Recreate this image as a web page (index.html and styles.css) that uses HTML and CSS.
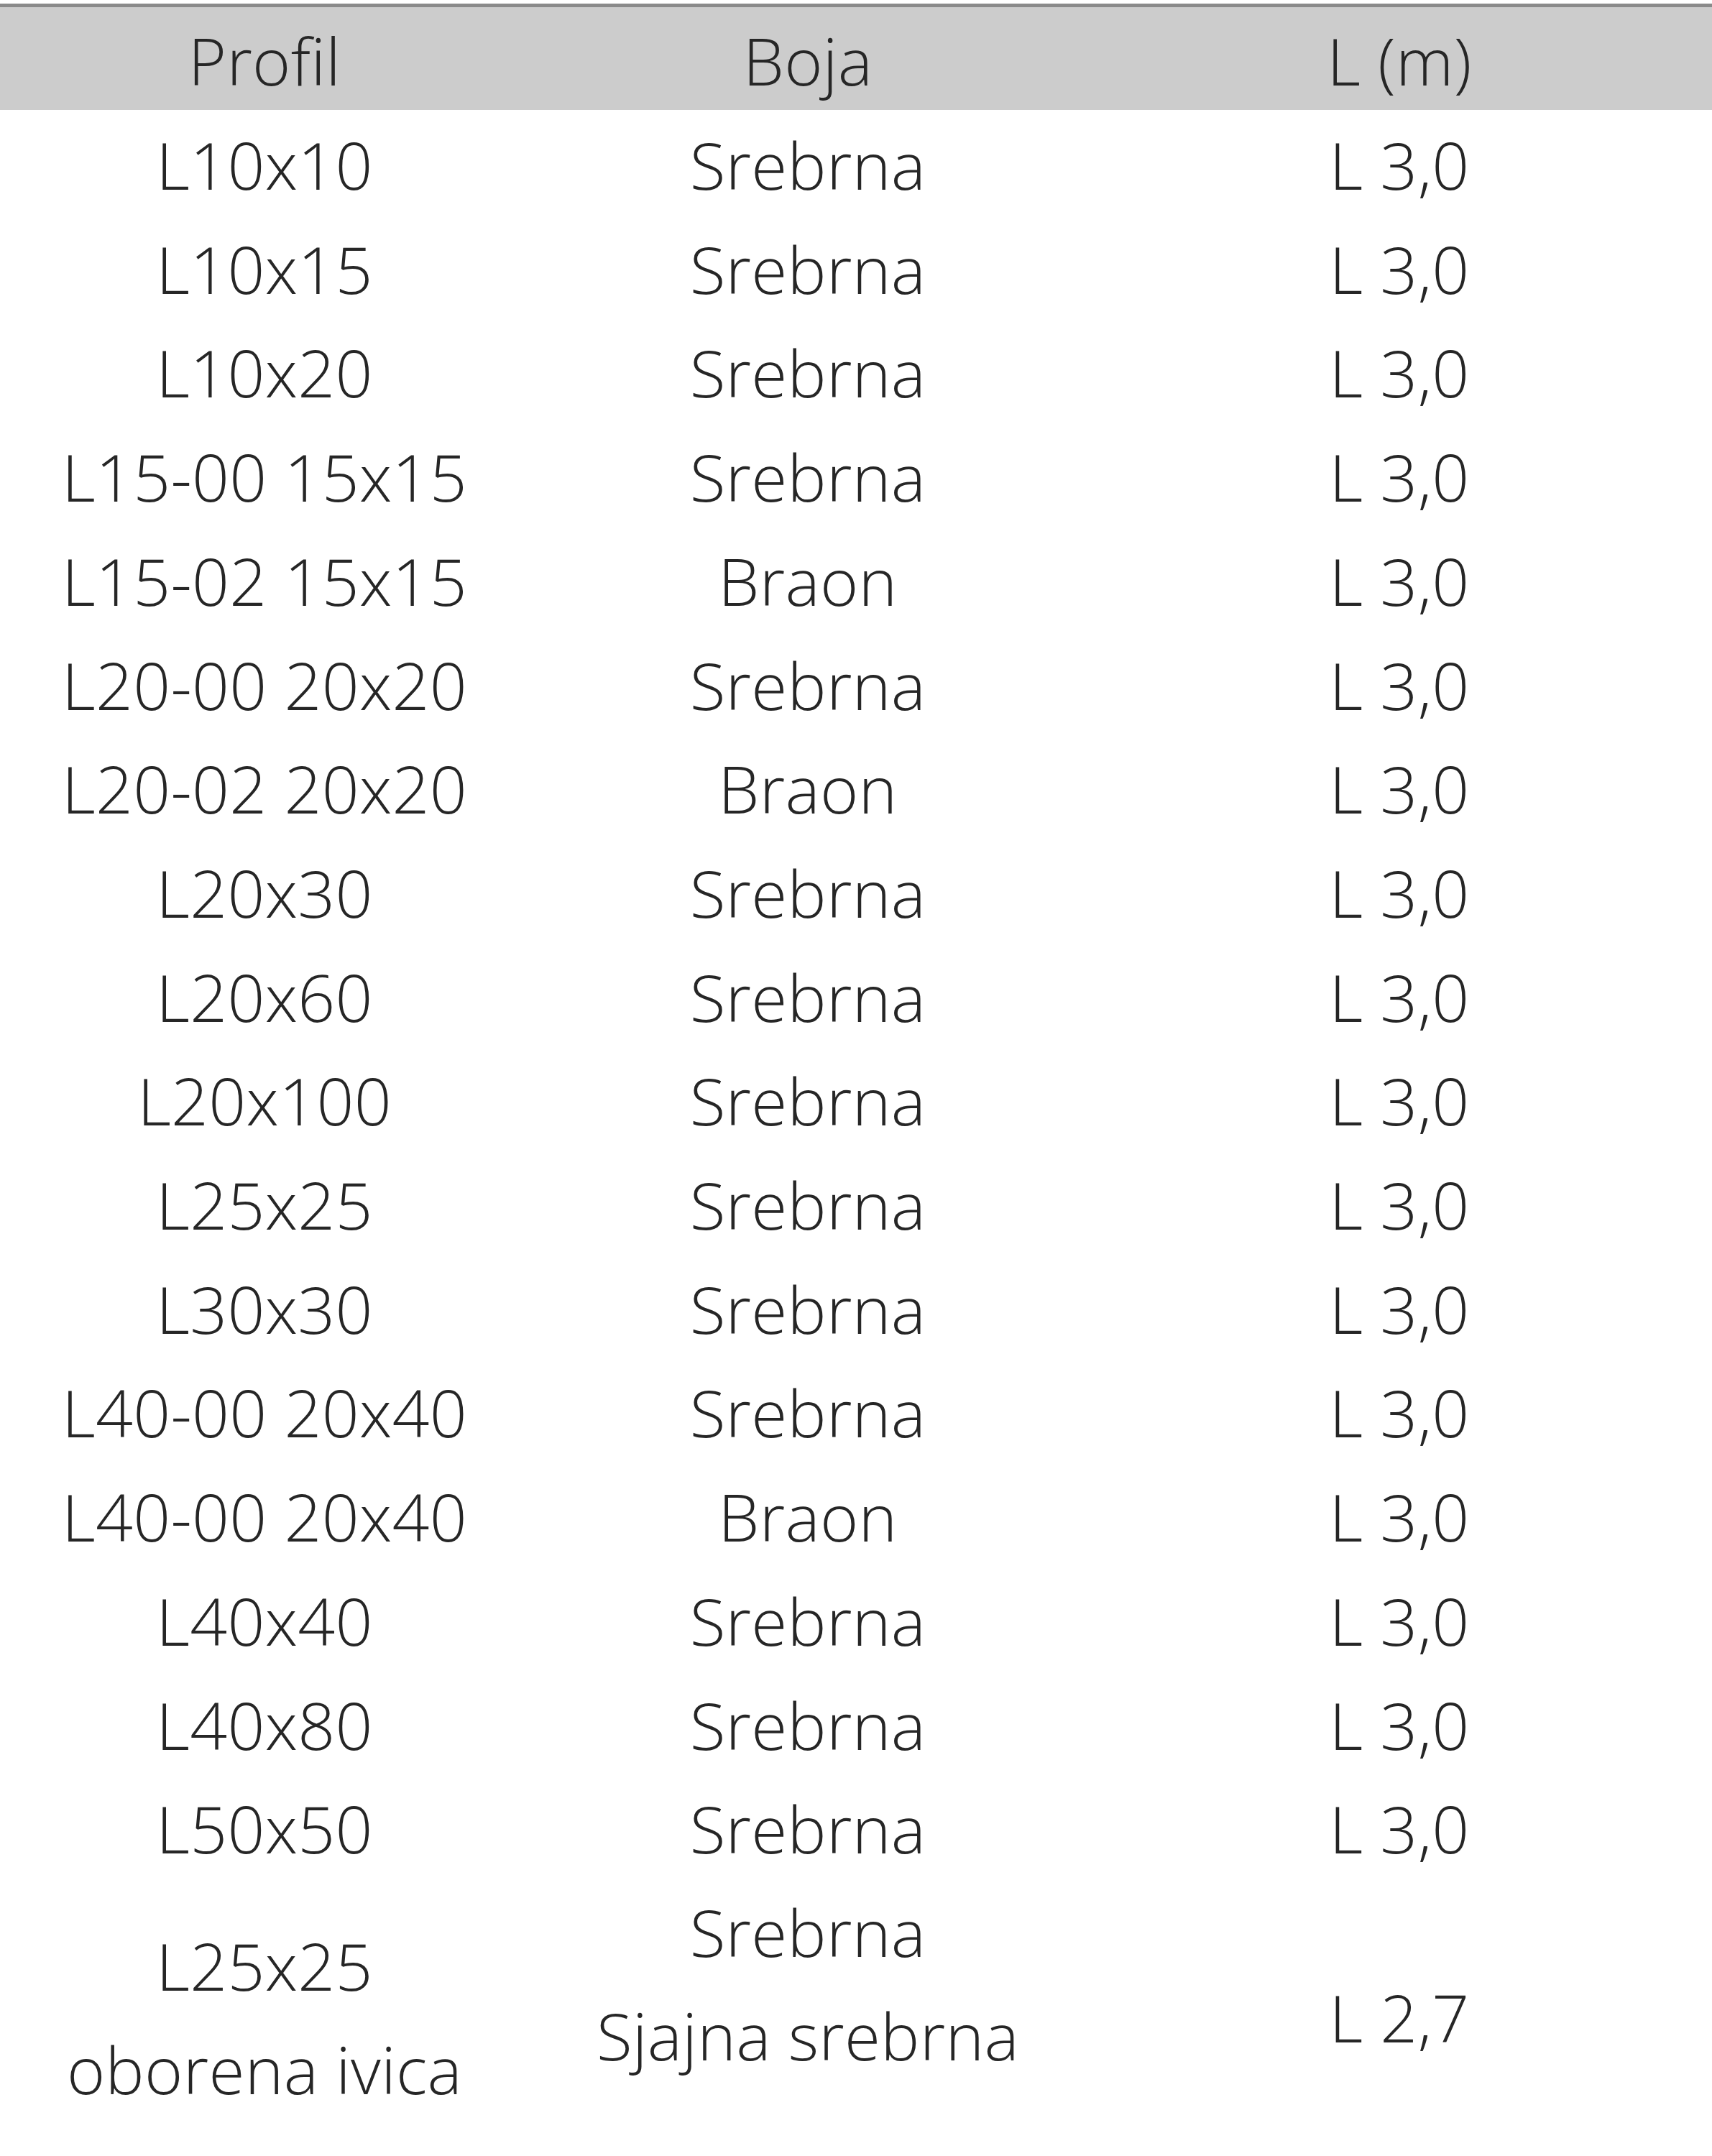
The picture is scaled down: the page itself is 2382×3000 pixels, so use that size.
FILE: index.html
```html
<!DOCTYPE html>
<html lang="sr">
<head>
<meta charset="utf-8">
<title>Profili</title>
<link rel="stylesheet" href="styles.css">
</head>
<body>
<table class="profiles">
  <colgroup>
    <col class="col-profil">
    <col class="col-boja">
    <col class="col-len">
  </colgroup>
  <thead>
    <tr class="head-row"><th>Profil</th><th>Boja</th><th>L (m)</th></tr>
  </thead>
  <tbody>
    <tr class="row"><td>L10x10</td><td>Srebrna</td><td>L 3,0</td></tr>
    <tr class="row"><td>L10x15</td><td>Srebrna</td><td>L 3,0</td></tr>
    <tr class="row"><td>L10x20</td><td>Srebrna</td><td>L 3,0</td></tr>
    <tr class="row"><td>L15-00 15x15</td><td>Srebrna</td><td>L 3,0</td></tr>
    <tr class="row"><td>L15-02 15x15</td><td>Braon</td><td>L 3,0</td></tr>
    <tr class="row"><td>L20-00 20x20</td><td>Srebrna</td><td>L 3,0</td></tr>
    <tr class="row"><td>L20-02 20x20</td><td>Braon</td><td>L 3,0</td></tr>
    <tr class="row"><td>L20x30</td><td>Srebrna</td><td>L 3,0</td></tr>
    <tr class="row"><td>L20x60</td><td>Srebrna</td><td>L 3,0</td></tr>
    <tr class="row"><td>L20x100</td><td>Srebrna</td><td>L 3,0</td></tr>
    <tr class="row"><td>L25x25</td><td>Srebrna</td><td>L 3,0</td></tr>
    <tr class="row"><td>L30x30</td><td>Srebrna</td><td>L 3,0</td></tr>
    <tr class="row"><td>L40-00 20x40</td><td>Srebrna</td><td>L 3,0</td></tr>
    <tr class="row"><td>L40-00 20x40</td><td>Braon</td><td>L 3,0</td></tr>
    <tr class="row"><td>L40x40</td><td>Srebrna</td><td>L 3,0</td></tr>
    <tr class="row"><td>L40x80</td><td>Srebrna</td><td>L 3,0</td></tr>
    <tr class="row"><td>L50x50</td><td>Srebrna</td><td>L 3,0</td></tr>
    <tr class="row-last"><td>L25x25<br>oborena ivica</td><td class="cell-top">Srebrna<br>Sjajna srebrna</td><td>L 2,7</td></tr>
  </tbody>
</table>
</body>
</html>
```
FILE: styles.css
```css
html, body {
  margin: 0;
  padding: 0;
  background: #ffffff;
}

.profiles {
  width: 2382px;
  table-layout: fixed;
  border-collapse: separate;
  border-spacing: 0;
  margin-top: 5px;
  border-top: 5px solid #8a8a8a;
  font-family: "Open Sans", "Noto Sans", sans-serif;
  font-size: 91px;
  font-weight: 300;
  letter-spacing: 0.3px;
  color: #262626;
}

.col-profil { width: 736px; }
.col-boja { width: 776px; }
.col-len { width: 870px; }

.profiles th,
.profiles td {
  text-align: center;
  vertical-align: middle;
  white-space: nowrap;
}

.profiles th {
  font-weight: 300;
  background: #cccccc;
  padding: 6px 0 0;
  line-height: 137px;
}

.head-row { height: 143px; }

.profiles td {
  padding: 8px 0 0;
  line-height: 136.7px;
}

.row { height: 144.7px; }

.row-last { height: 385px; }

.row-last td {
  padding: 3px 0 0;
  line-height: 144px;
}

.profiles td.cell-top {
  vertical-align: top;
}
```
